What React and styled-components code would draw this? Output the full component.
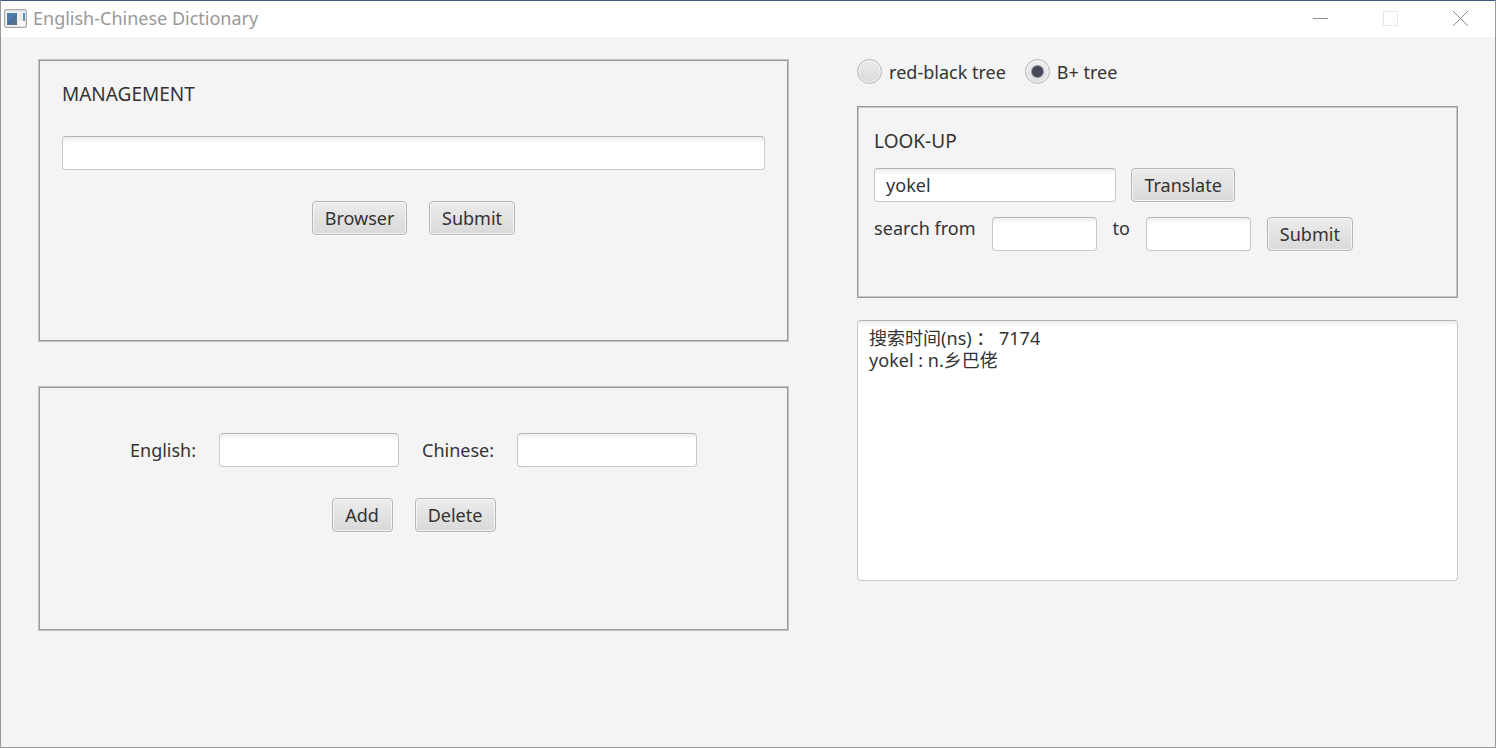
import React, { useState } from "react";
import styled, { createGlobalStyle } from "styled-components";

const GlobalStyle = createGlobalStyle`
  *, *::before, *::after { box-sizing: border-box; }
  body {
    margin: 0;
    background: #f4f4f4;
    color: #333;
    font: 18px/22px "Noto Sans", "Noto Sans CJK SC", sans-serif;
  }
  button, input, textarea { font: inherit; color: inherit; margin: 0; }
`;

const Window = styled.div`
  display: flex;
  flex-direction: column;
  min-height: 100vh;
  border: 1px solid #999;
  border-top-color: #3f5780;
  background: #f4f4f4;
`;

const TitleBar = styled.header`
  display: flex;
  align-items: center;
  height: 36px;
  padding: 0 0 2px 3px;
  background: #fff;
  color: #999;
`;

const AppIcon = styled.svg`
  flex: none;
  margin-right: 6px;
`;

const Caption = styled.h1`
  flex: 1;
  margin: 0;
  font-size: 18px;
  font-weight: 400;
`;

const WindowButton = styled.button`
  display: grid;
  place-items: center;
  width: 70px;
  height: 34px;
  padding: 0;
  border: 0;
  background: none;
  color: ${(p) => (p.disabled ? "#e9e9e9" : "#8f8f8f")};
`;

const Content = styled.main`
  display: flex;
  gap: 68px;
  padding: 22px 37px;
`;

const Column = styled.div`
  display: flex;
  flex-direction: column;
  flex: ${(p) => p.$share} 1 0;
  min-width: 0;
  gap: ${(p) => p.$gap}px;
`;

const Panel = styled.section`
  display: flex;
  flex-direction: column;
  gap: ${(p) => p.$gap}px;
  min-height: ${(p) => p.$minHeight}px;
  padding: ${(p) => p.$padding};
  border: 1px solid ${(p) => (p.$raised ? "#999" : "#c2c2c2")};
  box-shadow: inset 0 0 0 1px ${(p) => (p.$raised ? "#c8c8c8" : "#999")};
`;

const Heading = styled.h2`
  margin: 0;
  font-size: 19px;
  font-weight: 400;
  line-height: 22px;
`;

const Fields = styled.div`
  display: flex;
  flex-direction: column;
  gap: 15px;
`;

const Row = styled.div`
  display: flex;
  align-items: ${(p) => p.$align || "center"};
  justify-content: ${(p) => (p.$centered ? "center" : "flex-start")};
  gap: ${(p) => p.$gap}px;
`;

const TextField = styled.input`
  width: ${(p) => p.$width || "100%"};
  height: 34px;
  padding: 0 11px;
  border: 1px solid #c8c8c8;
  border-top-color: #b5b5b5;
  border-radius: 4px;
  background: linear-gradient(#eee, #fff 6px);
  outline: none;
`;

const Button = styled.button`
  height: 34px;
  min-width: ${(p) => p.$width}px;
  padding: 0 4px;
  border: 1px solid #b5b5b5;
  border-radius: 4px;
  background: linear-gradient(#ececec, #d9d9d9);
  box-shadow: inset 0 0 0 1px #f4f4f4, 0 1px 0 #fafafa;
`;

const RadioLabel = styled.label`
  display: flex;
  align-items: center;
  gap: 7px;
`;

const Radio = styled.input`
  appearance: none;
  width: 25px;
  height: 25px;
  border: 1px solid #b5b5b5;
  border-radius: 50%;
  background: linear-gradient(#ececec, #d9d9d9);
  box-shadow: inset 0 0 0 1px #f4f4f4, 0 1px 0 #fafafa;

  &:checked {
    background:
      radial-gradient(circle, #454859 5px, transparent 7px),
      linear-gradient(#f0f0f0, #dedede);
  }
`;

const Output = styled.textarea`
  display: block;
  width: 100%;
  height: 261px;
  padding: 6px 11px;
  border: 1px solid #c8c8c8;
  border-top-color: #b5b5b5;
  border-radius: 4px;
  background: linear-gradient(#eee, #fff 6px);
  outline: none;
  resize: none;
`;

export default function App() {
  const [tree, setTree] = useState("bplus");
  return (
    <>
      <GlobalStyle />
      <Window>
        <TitleBar>
          <AppIcon width="23" height="19" viewBox="0 0 23 19" aria-hidden="true">
            <rect x="0.5" y="0.5" width="22" height="18" rx="1.5" fill="#dfe1e3" stroke="#a8a8a8" />
            <rect x="2" y="3" width="19" height="14" fill="#f4f6f8" />
            <rect x="3" y="4" width="10" height="12" fill="#44719f" />
            <path d="M3 4H13L3 14Z" fill="#517fac" />
            <path d="M13 8V16H5Z" fill="#587286" />
            <rect x="14" y="4" width="4" height="8" fill="#e9eaeb" />
            <rect x="19" y="4" width="2" height="8" fill="#5f94bf" />
          </AppIcon>
          <Caption>English-Chinese Dictionary</Caption>
          <WindowButton aria-label="Minimize">
            <svg width="15" height="15" viewBox="0 0 15 15">
              <path d="M0 7.5H15" stroke="currentColor" />
            </svg>
          </WindowButton>
          <WindowButton aria-label="Maximize" disabled>
            <svg width="15" height="15" viewBox="0 0 15 15">
              <rect x="0.5" y="0.5" width="14" height="14" fill="none" stroke="currentColor" />
            </svg>
          </WindowButton>
          <WindowButton aria-label="Close">
            <svg width="15" height="15" viewBox="0 0 15 15">
              <path d="M0 0L15 15M15 0L0 15" stroke="currentColor" />
            </svg>
          </WindowButton>
        </TitleBar>

        <Content>
          <Column $share={5} $gap={44}>
            <Panel $gap={31} $minHeight={283} $padding="23px">
              <Heading id="management">MANAGEMENT</Heading>
              <TextField aria-labelledby="management" />
              <Row $centered $gap={22}>
                <Button $width={95}>Browser</Button>
                <Button $width={86}>Submit</Button>
              </Row>
            </Panel>

            <Panel $gap={31} $minHeight={245} $padding="46px 23px">
              <Row $centered $gap={23}>
                <label htmlFor="english">English:</label>
                <TextField id="english" $width="180px" />
                <label htmlFor="chinese">Chinese:</label>
                <TextField id="chinese" $width="180px" />
              </Row>
              <Row $centered $gap={22}>
                <Button $width={61}>Add</Button>
                <Button $width={81}>Delete</Button>
              </Row>
            </Panel>
          </Column>

          <Column $share={4} $gap={22}>
            <Row $gap={19}>
              <RadioLabel>
                <Radio type="radio" name="tree" checked={tree === "rb"} onChange={() => setTree("rb")} />
                red-black tree
              </RadioLabel>
              <RadioLabel>
                <Radio type="radio" name="tree" checked={tree === "bplus"} onChange={() => setTree("bplus")} />
                B+ tree
              </RadioLabel>
            </Row>

            <Panel $raised $gap={16} $minHeight={192} $padding="23px 16px">
              <Heading id="lookup">LOOK-UP</Heading>
              <Fields>
                <Row $gap={15}>
                  <TextField aria-labelledby="lookup" $width="242px" defaultValue="yokel" />
                  <Button $width={104}>Translate</Button>
                </Row>
                <Row $align="flex-start" $gap={16}>
                  <label htmlFor="from">search from</label>
                  <TextField id="from" $width="105px" />
                  <label htmlFor="to">to</label>
                  <TextField id="to" $width="105px" />
                  <Button $width={86}>Submit</Button>
                </Row>
              </Fields>
            </Panel>

            <Output
              aria-label="Result"
              spellCheck={false}
              defaultValue={"搜索时间(ns) ： 7174\nyokel : n.乡巴佬"}
            />
          </Column>
        </Content>
      </Window>
    </>
  );
}
